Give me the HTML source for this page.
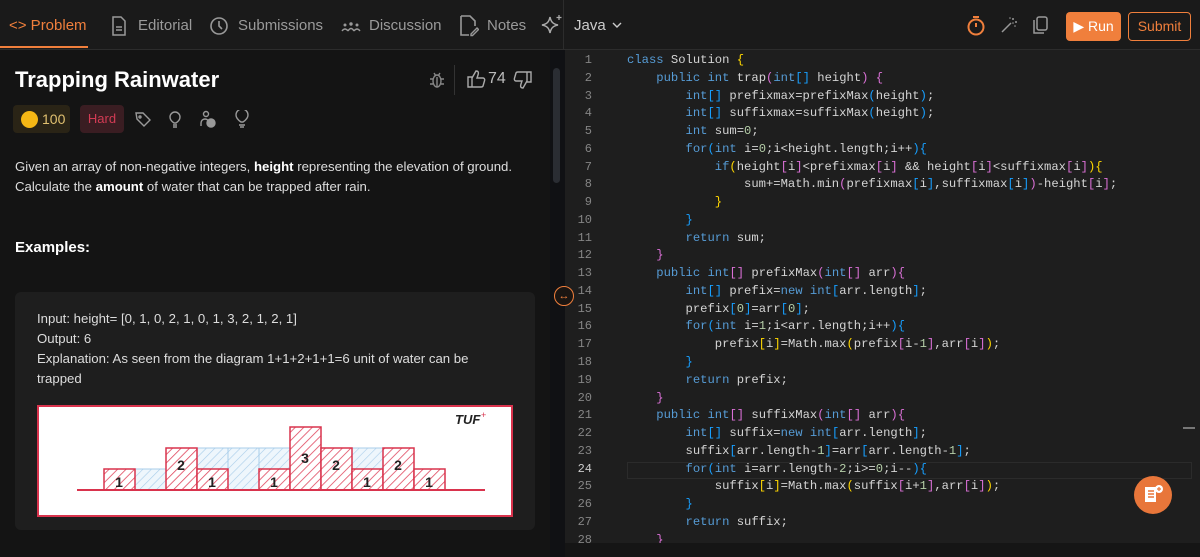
<!DOCTYPE html>
<html><head><meta charset="utf-8"><style>
*{margin:0;padding:0;box-sizing:border-box}
body{width:1200px;height:557px;background:#141414;font-family:"Liberation Sans",sans-serif;overflow:hidden;position:relative;color:#ddd}
.top{position:absolute;left:0;top:0;width:1200px;height:50px;background:#1a1a1a;border-bottom:1px solid #2c2c2c}
.tab{position:absolute;top:17px;font-size:15px;color:#9a9a9a}
.left{position:absolute;left:0;top:50px;width:550px;height:507px;background:#141414}
.ed{position:absolute;left:565px;top:50px;width:635px;height:493px;background:#1e1e1e}
.bot{position:absolute;left:565px;top:543px;width:635px;height:14px;background:#151515}
.clip{position:absolute;left:565px;top:50px;width:635px;height:493px;overflow:hidden}
.code{position:absolute;left:62px;top:2px;font-family:"Liberation Mono",monospace;font-size:12.2px;line-height:17.77px;color:#d4d4d4;white-space:pre}
.ln{position:absolute;left:3px;top:2px;width:24px;text-align:right;font-family:"Liberation Mono",monospace;font-size:12px;line-height:17.77px;color:#858585;white-space:pre}
.k{color:#569cd6}.y{color:#ffd700}.p{color:#da70d6}.b{color:#179fff}.n{color:#b5cea8}
.ex{position:absolute;left:15px;top:292px;width:520px;height:238px;background:#1e1e1e;border-radius:6px}
</style></head><body>
<div class="top"></div>
<div style="position:absolute;left:0;top:46px;width:88px;height:2px;background:#f07f3c"></div>
<div class="tab" style="left:9px;color:#f07f3c">&lt;&gt; Problem</div>
<svg style="position:absolute;left:111px;top:16px" width="16" height="20"><path d="M2 1h8l4 4v14H2z M5 11h6 M5 14h6" stroke="#999" fill="none" stroke-width="1.5"/></svg>
<div class="tab" style="left:138px">Editorial</div>
<svg style="position:absolute;left:209px;top:16px" width="20" height="20"><circle cx="10" cy="10" r="8" stroke="#999" fill="none" stroke-width="1.6"/><path d="M10 5v5l3 3" stroke="#999" fill="none" stroke-width="1.6"/></svg>
<div class="tab" style="left:238px">Submissions</div>
<svg style="position:absolute;left:341px;top:21px" width="20" height="12"><g fill="#999"><circle cx="4" cy="4" r="1.5"/><circle cx="10" cy="3" r="1.7"/><circle cx="16" cy="4" r="1.5"/><path d="M1 10q3-4 6 0M7 10q3-5 6 0M13 10q3-4 6 0" stroke="#999" fill="none" stroke-width="1.4"/></g></svg>
<div class="tab" style="left:369px">Discussion</div>
<svg style="position:absolute;left:459px;top:15px" width="20" height="22"><path d="M2 1h9l5 5v5 M2 1v19h8" stroke="#999" fill="none" stroke-width="1.6"/><path d="M12 19l6-6 1.5 1.5-6 6h-1.5z" stroke="#999" fill="none" stroke-width="1.4"/></svg>
<div class="tab" style="left:487px">Notes</div>
<svg style="position:absolute;left:541px;top:14px" width="22" height="22"><path d="M9 3c1 5 3 7 8 8-5 1-7 3-8 8-1-5-3-7-8-8 5-1 7-3 8-8z" stroke="#aaa" fill="none" stroke-width="1.5"/><path d="M18 1v5M15.5 3.5h5" stroke="#aaa" stroke-width="1.3"/></svg>
<div style="position:absolute;left:563px;top:0;width:1px;height:50px;background:#2c2c2c"></div>
<div class="tab" style="left:574px;color:#ccc">Java</div>
<svg style="position:absolute;left:612px;top:22px" width="10" height="7"><path d="M1 1l4 4 4-4" stroke="#ccc" fill="none" stroke-width="1.4"/></svg>
<svg style="position:absolute;left:966px;top:15px" width="20" height="22"><circle cx="10" cy="12" r="7.5" stroke="#f07f3c" fill="none" stroke-width="2"/><path d="M7 2h6M10 12V8" stroke="#f07f3c" stroke-width="2"/></svg>
<svg style="position:absolute;left:1000px;top:16px" width="18" height="18"><path d="M2 16L11 7" stroke="#999" stroke-width="1.5"/><g fill="#999"><circle cx="13" cy="3" r="1"/><circle cx="16" cy="6" r="1"/><circle cx="10" cy="2" r="0.8"/><circle cx="15" cy="10" r="0.8"/><circle cx="13" cy="7" r="0.8"/></g></svg>
<svg style="position:absolute;left:1033px;top:16px" width="16" height="19"><rect x="4" y="1" width="10" height="13" rx="2" stroke="#999" fill="none" stroke-width="1.5"/><path d="M1 4v13h10" stroke="#999" fill="none" stroke-width="1.5"/></svg>
<div style="position:absolute;left:1066px;top:12px;width:55px;height:29px;background:#f07f3c;border-radius:4px;color:#fff;font-size:14px;line-height:29px;text-align:center">▶ Run</div>
<div style="position:absolute;left:1128px;top:12px;width:63px;height:29px;border:1px solid #f07f3c;border-radius:4px;color:#f07f3c;font-size:14px;line-height:27px;text-align:center">Submit</div>

<div class="left">
<div style="position:absolute;left:15px;top:17px;font-size:22px;font-weight:bold;color:#fff">Trapping Rainwater</div>
<svg style="position:absolute;left:429px;top:20px" width="16" height="20"><g stroke="#888" fill="none" stroke-width="1.4"><ellipse cx="8" cy="11" rx="4" ry="6"/><path d="M5 3l2 3M11 3l-2 3M1 9h3M12 9h3M1 14h3M12 14h3M8 7v10"/></g></svg>
<div style="position:absolute;left:454px;top:15px;width:1px;height:30px;background:#333"></div>
<svg style="position:absolute;left:466px;top:19px" width="20" height="20"><path d="M2 8h4v10H2z M6 9l4-7c2 0 3 1 2 4l-1 3h6c1 0 2 1 1.6 2.5L17 17c-.3 1-1 1-2 1H6" stroke="#aaa" fill="none" stroke-width="1.4"/></svg>
<div style="position:absolute;left:488px;top:20px;color:#bbb;font-size:16px">74</div>
<svg style="position:absolute;left:513px;top:20px" width="20" height="20"><path d="M18 12h-4V2h4z M14 11l-4 7c-2 0-3-1-2-4l1-3H3c-1 0-2-1-1.6-2.5L3 3c.3-1 1-1 2-1h9" stroke="#aaa" fill="none" stroke-width="1.4"/></svg>
<div style="position:absolute;left:13px;top:55px;width:57px;height:28px;background:#2a2416;border-radius:4px"></div>
<div style="position:absolute;left:21px;top:61px;width:17px;height:17px;border-radius:50%;background:#f5b715"></div>
<div style="position:absolute;left:42px;top:61px;font-size:14px;color:#e0c070">100</div>
<div style="position:absolute;left:80px;top:55px;width:44px;height:28px;background:#3a1d22;border-radius:4px;color:#d23b54;font-size:13px;line-height:28px;text-align:center">Hard</div>
<svg style="position:absolute;left:134px;top:60px" width="130" height="20"><g stroke="#999" fill="none" stroke-width="1.4">
<path d="M2 3h7l7 7-6 6-7-7z"/><circle cx="6" cy="7" r="1"/>
<path d="M40 13c-3-2-4-4-4-6a5 5 0 0110 0c0 2-1 4-4 6zM39 15h4M39 17h4"/>
<circle cx="72" cy="4" r="2.5"/><path d="M67 16v-3a4 4 0 018 0"/><circle cx="77" cy="13" r="4" fill="#999"/>
<path d="M107 12c-3-2-5-4-5-7a6 6 0 0112 0c0 3-2 5-5 7zM105 15h6M106 17h4"/></g></svg>
<div style="position:absolute;left:15px;top:107px;font-size:13.2px;line-height:20px;color:#ddd">Given an array of non-negative integers, <b style="color:#fff">height</b> representing the elevation of ground.<br>Calculate the <b style="color:#fff">amount</b> of water that can be trapped after rain.</div>
<div style="position:absolute;left:15px;top:189px;font-size:15px;font-weight:bold;color:#fff">Examples:</div>
</div>
<div class="ex">
<div style="position:absolute;left:22px;top:17px;font-size:13.2px;line-height:20px;color:#ddd">Input: height= [0, 1, 0, 2, 1, 0, 1, 3, 2, 1, 2, 1]<br>Output: 6<br>Explanation: As seen from the diagram 1+1+2+1+1=6 unit of water can be<br>trapped</div>
<svg style="position:absolute;left:22px;top:113px" width="476" height="112">
<defs>
<pattern id="r" width="6" height="6" patternUnits="userSpaceOnUse" patternTransform="rotate(45)"><rect width="6" height="6" fill="#fff"/><line x1="0" y1="0" x2="0" y2="6" stroke="#e0475e" stroke-width="1.6"/></pattern>
<pattern id="w" width="6" height="6" patternUnits="userSpaceOnUse" patternTransform="rotate(45)"><rect width="6" height="6" fill="#eef6fc"/><line x1="0" y1="0" x2="0" y2="6" stroke="#a8cdea" stroke-width="1.2"/></pattern>
</defs>
<rect x="1" y="1" width="474" height="110" fill="#fff" stroke="#d9334d" stroke-width="2"/>
<text x="418" y="19" font-family="Liberation Sans" font-weight="bold" font-style="italic" font-size="13" fill="#222">TUF</text><text x="444" y="13" font-size="9" fill="#d9334d">+</text>
<g stroke="#a8cdea" fill="url(#w)">
<rect x="98" y="64" width="31" height="21"/>
<rect x="160" y="43" width="31" height="21"/>
<rect x="191" y="43" width="31" height="42"/>
<rect x="222" y="43" width="31" height="21"/>
<rect x="315" y="43" width="31" height="21"/>
</g>
<g stroke="#d9334d" fill="url(#r)" stroke-width="1.5">
<rect x="67" y="64" width="31" height="21"/>
<rect x="129" y="43" width="31" height="42"/>
<rect x="160" y="64" width="31" height="21"/>
<rect x="222" y="64" width="31" height="21"/>
<rect x="253" y="22" width="31" height="63"/>
<rect x="284" y="43" width="31" height="42"/>
<rect x="315" y="64" width="31" height="21"/>
<rect x="346" y="43" width="31" height="42"/>
<rect x="377" y="64" width="31" height="21"/>
</g>
<line x1="40" y1="85" x2="448" y2="85" stroke="#d9334d" stroke-width="2"/>
<g font-family="Liberation Sans" font-weight="bold" font-size="14" fill="#222" text-anchor="middle">
<text x="82" y="82">1</text><text x="144" y="65">2</text><text x="175" y="82">1</text><text x="237" y="82">1</text><text x="268" y="58">3</text><text x="299" y="65">2</text><text x="330" y="82">1</text><text x="361" y="65">2</text><text x="392" y="82">1</text></g>
</svg>
</div>
<div style="position:absolute;left:550px;top:50px;width:15px;height:507px;background:#101114"></div>
<div style="position:absolute;left:553px;top:68px;width:7px;height:115px;background:#2a2d33;border-radius:4px"></div>
<div class="ed"></div>
<div class="bot"></div>
<div style="position:absolute;left:554px;top:286px;width:20px;height:20px;border-radius:50%;border:1px solid #f07f3c;background:#1a1512;color:#f07f3c;font-size:11px;text-align:center;line-height:18px">↔</div>
<div style="position:absolute;left:627px;top:462px;width:565px;height:17px;border:1px solid #2b2b2b"></div>
<div style="position:absolute;left:1183px;top:427px;width:12px;height:2px;background:#777"></div>
<div class="clip">
<div class="ln">1
2
3
4
5
6
7
8
9
10
11
12
13
14
15
16
17
18
19
20
21
22
23
<span style="color:#ccc">24</span>
25
26
27
28</div>
<div class="code"><span class="k">class</span> Solution <span class="y">{</span>
    <span class="k">public</span> <span class="k">int</span> trap<span class="p">(</span><span class="k">int</span><span class="b">[]</span> height<span class="p">)</span> <span class="p">{</span>
        <span class="k">int</span><span class="b">[]</span> prefixmax=prefixMax<span class="b">(</span>height<span class="b">)</span>;
        <span class="k">int</span><span class="b">[]</span> suffixmax=suffixMax<span class="b">(</span>height<span class="b">)</span>;
        <span class="k">int</span> sum=<span class="n">0</span>;
        <span class="k">for</span><span class="b">(</span><span class="k">int</span> i=<span class="n">0</span>;i&lt;height.length;i++<span class="b">){</span>
            <span class="k">if</span><span class="y">(</span>height<span class="p">[</span>i<span class="p">]</span>&lt;prefixmax<span class="p">[</span>i<span class="p">]</span> &amp;&amp; height<span class="p">[</span>i<span class="p">]</span>&lt;suffixmax<span class="p">[</span>i<span class="p">]</span><span class="y">){</span>
                sum+=Math.min<span class="p">(</span>prefixmax<span class="b">[</span>i<span class="b">]</span>,suffixmax<span class="b">[</span>i<span class="b">]</span><span class="p">)</span>-height<span class="p">[</span>i<span class="p">]</span>;
            <span class="y">}</span>
        <span class="b">}</span>
        <span class="k">return</span> sum;
    <span class="p">}</span>
    <span class="k">public</span> <span class="k">int</span><span class="p">[]</span> prefixMax<span class="p">(</span><span class="k">int</span><span class="p">[]</span> arr<span class="p">){</span>
        <span class="k">int</span><span class="b">[]</span> prefix=<span class="k">new</span> <span class="k">int</span><span class="b">[</span>arr.length<span class="b">]</span>;
        prefix<span class="b">[</span><span class="n">0</span><span class="b">]</span>=arr<span class="b">[</span><span class="n">0</span><span class="b">]</span>;
        <span class="k">for</span><span class="b">(</span><span class="k">int</span> i=<span class="n">1</span>;i&lt;arr.length;i++<span class="b">){</span>
            prefix<span class="y">[</span>i<span class="y">]</span>=Math.max<span class="y">(</span>prefix<span class="p">[</span>i-<span class="n">1</span><span class="p">]</span>,arr<span class="p">[</span>i<span class="p">]</span><span class="y">)</span>;
        <span class="b">}</span>
        <span class="k">return</span> prefix;
    <span class="p">}</span>
    <span class="k">public</span> <span class="k">int</span><span class="p">[]</span> suffixMax<span class="p">(</span><span class="k">int</span><span class="p">[]</span> arr<span class="p">){</span>
        <span class="k">int</span><span class="b">[]</span> suffix=<span class="k">new</span> <span class="k">int</span><span class="b">[</span>arr.length<span class="b">]</span>;
        suffix<span class="b">[</span>arr.length-<span class="n">1</span><span class="b">]</span>=arr<span class="b">[</span>arr.length-<span class="n">1</span><span class="b">]</span>;
        <span class="k">for</span><span class="b">(</span><span class="k">int</span> i=arr.length-<span class="n">2</span>;i&gt;=<span class="n">0</span>;i--<span class="b">){</span>
            suffix<span class="y">[</span>i<span class="y">]</span>=Math.max<span class="y">(</span>suffix<span class="p">[</span>i+<span class="n">1</span><span class="p">]</span>,arr<span class="p">[</span>i<span class="p">]</span><span class="y">)</span>;
        <span class="b">}</span>
        <span class="k">return</span> suffix;
    <span class="p">}</span></div>
</div>
<div style="position:absolute;left:1134px;top:476px;width:38px;height:38px;border-radius:50%;background:#e8763a"></div>
<svg style="position:absolute;left:1143px;top:484px" width="22" height="22"><path d="M2 3h11v15H2z" fill="#fff"/><path d="M5 7h6M5 10h6M5 13h6" stroke="#e8763a" stroke-width="1.5"/><circle cx="16" cy="5" r="4" fill="#fff"/><path d="M16 3v4M14 5h4" stroke="#e8763a" stroke-width="1.2"/></svg>
</body></html>
